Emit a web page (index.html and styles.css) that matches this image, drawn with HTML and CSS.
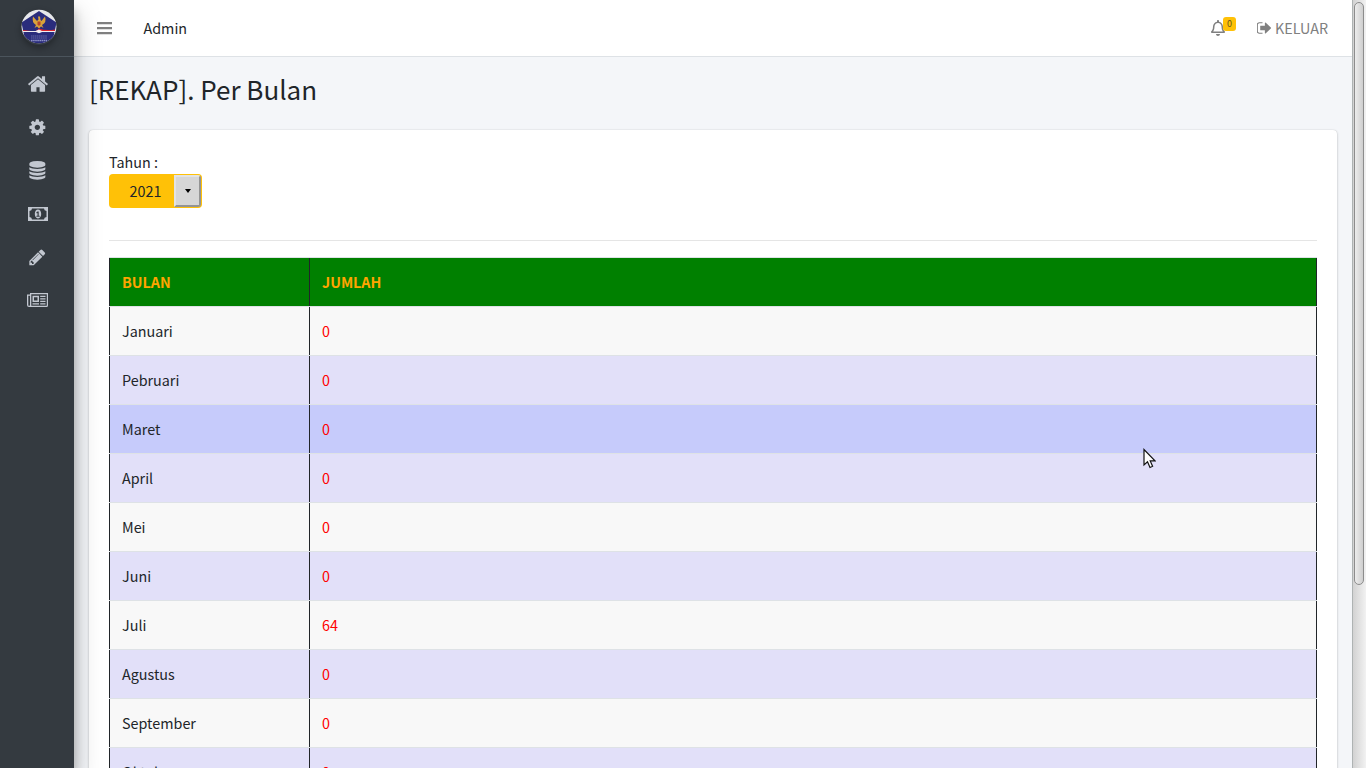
FILE: index.html
```html
<!DOCTYPE html>
<html lang="id">
<head>
<meta charset="utf-8">
<title>Rekap Per Bulan</title>
<link rel="stylesheet" href="styles.css">
</head>
<body>
<div class="app">
  <aside class="sidebar">
    <div class="brand">
      <svg class="logo" viewBox="0 0 36 36">
        <defs><clipPath id="round"><ellipse cx="18" cy="17.500" rx="17.500" ry="16.700"/></clipPath></defs>
        <g clip-path="url(#round)">
          <path fill="#e6e7ea" d="M0 0h36v36H0z"/>
          <path fill="#2a2c7c" d="M18 2 35.500 13.500 31 36H5L.5 13.500z"/>
          <path fill="#d9a23a" d="M12 7.500q-1.500 6 3 8.500l-1.500 3 2.500-1.500 2 2 2-2 2.500 1.500-1.500-3q5-2.500 3-8.500l-3.500 4.500-1-1-.5-3.500-2 0 .5 3-1.500 1.500z"/>
          <path fill="#b5452c" d="M16.500 12.500h3v3L18 17l-1.500-1.500z"/>
          <path fill="#d8262e" d="M2 21q8 1.500 13 1l3-2.500q7 2.500 16 1V22H2z"/>
          <path fill="#f1edf0" d="M2 22h12.500l3.500-1.500L21 22h13v1H21l-3 1.300L15 23H2z"/>
          <path stroke="#6d70ac" stroke-width=".9" stroke-dasharray="1.500 .4" d="M10 27h16M10 29h16"/>
          <path stroke="#8d90c4" stroke-width="1.600" stroke-dasharray="1.600 .5" d="M10 31.500h16"/>
        </g>
      </svg>
    </div>
    <nav class="menu">
      <a class="menu-item"><svg class="ico-home" viewBox="0 0 1792 1792"><path d="M1472 992v480q0 26-19 45t-45 19h-384v-384h-256v384h-384q-26 0-45-19t-19-45v-480q0-1 .5-3t.5-3l575-474 575 474q1 2 1 6zm223-69l-62 74q-8 9-21 11h-3q-13 0-21-7l-692-577-692 577q-12 8-24 7-13-2-21-11l-62-74q-8-10-7-23.500t11-21.500l719-599q32-26 76-26t76 26l244 204v-195q0-14 9-23t23-9h192q14 0 23 9t9 23v408l219 182q10 8 11 21.500t-7 23.500z"/></svg></a>
      <a class="menu-item"><svg class="ico" viewBox="0 0 1792 1792"><path d="M1152 896q0-106-75-181t-181-75-181 75-75 181 75 181 181 75 181-75 75-181zm512-109v222q0 12-8 23t-20 13l-185 28q-19 54-39 91 35 50 107 138 10 12 10 25t-9 23q-27 37-99 108t-94 71q-12 0-26-9l-138-108q-44 23-91 38-16 136-29 186-7 28-36 28h-222q-14 0-24.500-8.500t-11.500-21.500l-28-184q-49-16-90-37l-141 107q-10 9-25 9-14 0-25-11-126-114-165-168-7-10-7-23 0-12 8-23 15-21 51-66.500t54-70.500q-27-50-41-99l-183-27q-13-2-21-12.500t-8-23.500v-222q0-12 8-23t19-13l186-28q14-46 39-92-40-57-107-138-10-12-10-24 0-10 9-23 26-36 98.500-107.500t94.500-71.500q13 0 26 10l138 107q44-23 91-38 16-136 29-186 7-28 36-28h222q14 0 24.500 8.500t11.500 21.500l28 184q49 16 90 37l142-107q9-9 24-9 13 0 25 10 129 119 165 170 7 8 7 22 0 12-8 23-15 21-51 66.500t-54 70.500q26 50 41 98l183 28q13 2 21 12.500t8 23.500z"/></svg></a>
      <a class="menu-item"><svg class="ico" viewBox="0 0 1792 1792"><path d="M896 768q237 0 443-43t325-127v170q0 69-103 128t-280 93.500-385 34.500-385-34.500-280-93.500-103-128v-170q119 84 325 127t443 43zm0 768q237 0 443-43t325-127v170q0 69-103 128t-280 93.500-385 34.500-385-34.500-280-93.500-103-128v-170q119 84 325 127t443 43zm0-384q237 0 443-43t325-127v170q0 69-103 128t-280 93.500-385 34.500-385-34.500-280-93.500-103-128v-170q119 84 325 127t443 43zm0-1152q208 0 385 34.500t280 93.500 103 128v128q0 69-103 128t-280 93.500-385 34.500-385-34.500-280-93.500-103-128v-128q0-69 103-128t280-93.500 385-34.500z"/></svg></a>
      <a class="menu-item"><svg class="ico-wide" viewBox="0 0 20 14"><path fill-rule="evenodd" d="M0 0h20v14H0zM4 1.500A2.600 2.600 0 0 1 1.500 4v6A2.600 2.600 0 0 1 4 12.500h12A2.600 2.600 0 0 1 18.500 10V4A2.600 2.600 0 0 1 16 1.500z"/><path fill-rule="evenodd" d="M10 2.600c2 0 3.200 2 3.200 4.400S12 11.400 10 11.400 6.800 9.400 6.800 7 8 2.600 10 2.600zM9.500 4.500 8.200 5.600l.7.800.6-.4v2.800H8.400v1h3.300v-1h-1V4.500z"/></svg></a>
      <a class="menu-item"><svg class="ico" viewBox="0 0 1792 1792"><path d="M491 1536l91-91-235-235-91 91v107h128v128h107zm523-928q0-22-22-22-10 0-17 7l-542 542q-7 7-7 17 0 22 22 22 10 0 17-7l542-542q7-7 7-17zm-54-192l416 416-832 832h-416v-416zm683 96q0 53-37 90l-166 166-416-416 166-165q36-38 90-38 53 0 91 38l235 234q37 39 37 91z"/></svg></a>
      <a class="menu-item"><svg class="ico-news" viewBox="0 0 21 14"><path fill-rule="evenodd" d="M3 0h18v12.500a1.500 1.500 0 0 1-1.500 1.500h-17.500A2 2 0 0 1 0 12V1.500h3zM1.300 2.800V12a.8.800 0 0 0 1.700 0V2.800zM4.300 1.300V12.700h15a.5.500 0 0 0 .5-.5V1.300zM5.500 2.700H12V9H5.500zM7 4.200v3.300h3.500V4.200zM13.200 2.700h5.300V4h-5.300zM13.200 5.200h5.300v1.300h-5.300zM13.200 7.700h5.300V9h-5.300zM5.500 10.200H12v1.300H5.500zM13.200 10.200h5.300v1.300h-5.300z"/></svg></a>
    </nav>
  </aside>
  <div class="main">
    <header class="topbar">
      <svg class="bars" viewBox="0 0 15 13"><path d="M0 0h15v2.300H0zM0 5h15v2.300H0zM0 10h15v2.300H0z"/></svg>
      <span class="user">Admin</span>
      <span class="bell"><svg viewBox="0 0 448 512"><path d="M439.390 362.290c-19.320-20.760-55.470-51.990-55.470-154.290 0-77.700-54.480-139.900-127.940-155.160V32c0-17.670-14.320-32-31.980-32s-31.980 14.330-31.980 32v20.840C118.560 68.100 64.080 130.300 64.080 208c0 102.300-36.150 133.530-55.470 154.290-6 6.450-8.660 14.160-8.610 21.710.11 16.400 12.980 32 32.100 32h383.800c19.120 0 32-15.600 32.100-32 .05-7.550-2.610-15.270-8.610-21.710zM67.530 368c21.220-27.970 44.420-74.330 44.530-159.420 0-.2-.06-.38-.06-.58 0-61.860 50.140-112 112-112s112 50.140 112 112c0 .2-.06.38-.06.58.11 85.100 23.310 131.460 44.530 159.420H67.530zM224 512c35.320 0 63.970-28.650 63.970-64H160.030c0 35.350 28.650 64 63.970 64z"/></svg><span class="badge">0</span></span>
      <a class="logout"><svg viewBox="96 256 1536 1280"><path d="M704 1440q0 4 1 20t.5 26.500-3 23.500-10 19.500-20.500 6.500h-320q-119 0-203.500-84.500t-84.500-203.500v-704q0-119 84.500-203.500t203.500-84.500h320q13 0 22.500 9.500t9.500 22.500q0 4 1 20t.5 26.500-3 23.500-10 19.500-20.500 6.500h-320q-66 0-113 47t-47 113v704q0 66 47 113t113 47h312l11.500 1 11.500 3 8 5.500 7 9 2 13.500zm928-544q0 26-19 45l-544 544q-19 19-45 19t-45-19-19-45v-288h-448q-26 0-45-19t-19-45v-384q0-26 19-45t45-19h448v-288q0-26 19-45t45-19 45 19l544 544q19 19 19 45z"/></svg><span>KELUAR</span></a>
    </header>
    <h1 class="title">[REKAP]. Per Bulan</h1>
    <section class="card">
      <div class="label">Tahun :</div>
      <div class="select"><span class="year">2021</span><span class="drop"></span></div>
      <div class="rule"></div>
      <div class="table">
        <div class="row head"><div class="month">BULAN</div><div class="count">JUMLAH</div></div>
        <div class="row"><div class="month">Januari</div><div class="count">0</div></div>
        <div class="row alt"><div class="month">Pebruari</div><div class="count">0</div></div>
        <div class="row hover"><div class="month">Maret</div><div class="count">0</div></div>
        <div class="row alt"><div class="month">April</div><div class="count">0</div></div>
        <div class="row"><div class="month">Mei</div><div class="count">0</div></div>
        <div class="row alt"><div class="month">Juni</div><div class="count">0</div></div>
        <div class="row"><div class="month">Juli</div><div class="count">64</div></div>
        <div class="row alt"><div class="month">Agustus</div><div class="count">0</div></div>
        <div class="row"><div class="month">September</div><div class="count">0</div></div>
        <div class="row alt"><div class="month">Oktober</div><div class="count">0</div></div>
      </div>
    </section>
  </div>
  <div class="scrollbar"><div class="thumb"></div></div>
</div>
<svg class="cursor" viewBox="0 0 13 21"><path fill="#fff" stroke="#111" stroke-width="1.200" d="M1 1.500V17l3.500-3.200L7 19.500l2.600-1.200-2.400-5.400H12z"/></svg>
</body>
</html>
```
FILE: styles.css
```css
* { box-sizing: border-box; }
body {
  margin: 0;
  height: 768px;
  overflow: hidden;
  font-family: "Noto Sans CJK SC", sans-serif;
  font-size: 14.35px;
  line-height: 24px;
  color: #212529;
}
svg { display: block; fill: currentColor; }
.app { display: flex; height: 768px; overflow: hidden; }
.sidebar {
  position: relative;
  z-index: 2;
  flex: none;
  width: 74px;
  background: #343a40;
  color: #c2c7d0;
  box-shadow: 0 14px 28px rgba(0,0,0,.25), 0 10px 10px rgba(0,0,0,.22);
}
.brand {
  height: 57px;
  padding: 9px 0 0 20.5px;
  border-bottom: 1px solid #4b545c;
}
.logo { width: 36px; height: 36px; border-radius: 50%; box-shadow: 0 3px 6px rgba(0,0,0,.3); }
.menu { display: flex; flex-direction: column; padding-top: 5.5px; }
.menu-item { display: flex; align-items: center; justify-content: center; height: 43.2px; padding-left: 1px; }
.ico { width: 18.7px; height: 18.7px; }
.ico-home { width: 22px; height: 22px; }
.ico-wide { width: 20px; height: 14px; }
.ico-news { width: 21px; height: 14px; }
.main {
  flex: 1;
  min-width: 0;
  background: #f4f6f9;
}
.topbar {
  display: flex;
  align-items: center;
  height: 57px;
  padding: 0 24px 0 23px;
  background: #fff;
  border-bottom: 1px solid #dee2e6;
  color: #808080;
}
.bars { width: 15px; height: 13px; margin-top: 1px; }
.user { margin-left: 31.5px; color: #212529; }
.bell { position: relative; margin-left: auto; width: 14px; }
.bell svg { width: 14px; height: 16px; }
.badge {
  position: absolute;
  left: 12px;
  top: -3px;
  width: 13px;
  height: 14px;
  border-radius: 3px;
  background: #ffc107;
  color: #66581f;
  font-size: 9px;
  line-height: 13px;
  text-align: center;
}
.logout { display: flex; align-items: center; gap: 4px; margin-left: 32px; }
.logout svg { width: 14px; height: 12px; }
.title { margin: 14px 0 0 15px; font-size: 26px; font-weight: 400; line-height: 36px; }
.card {
  height: 700px;
  margin: 23px 15px 0;
  padding: 20px 20px 0;
  background: #fff;
  border-radius: 4px;
  box-shadow: 0 0 1px rgba(0,0,0,.2), 0 1px 3px rgba(0,0,0,.2);
}
.label { height: 24px; }
.select {
  display: flex;
  width: 93px;
  height: 34px;
  padding: 1px;
  border-radius: 4px;
  background: #ffc107;
}
.year { flex: 1; padding-left: 19.5px; line-height: 32px; }
.drop {
  display: flex;
  align-items: center;
  justify-content: center;
  width: 27px;
  border: 2px solid;
  border-color: #e3e3e3 #949494 #949494 #e3e3e3;
  border-radius: 0 3px 3px 0;
  background: #d6d6d6;
}
.drop::after { content: ""; border: 3.5px solid transparent; border-top: 4px solid #000; border-bottom: 0; }
.rule { margin: 32px 0 16px; height: 1px; background: #e5e5e5; }
.row { display: flex; height: 49px; border-top: 1px solid #dee2e6; background: #f8f8f8; }
.row > div { padding: 12px 12px 0; border-left: 1px solid #212529; }
.row .month { width: 200px; }
.row .count { flex: 1; border-right: 1px solid #212529; color: #f00; }
.row.alt { background: #e2e0f9; }
.row.hover { background: #c6cbfb; }
.row.head { background: #008000; font-weight: 700; color: #ffa500; }
.row.head .count { color: #ffa500; }
.scrollbar {
  flex: none;
  width: 14px;
  padding-top: 2px;
  border-left: 1px solid #aeb3b3;
  background: linear-gradient(90deg, #d2d2d2, #f2f2f2);
}
.thumb {
  height: 583px;
  width: 10px;
  margin-left: 1px;
  border: 1px solid #8d8d8d;
  border-radius: 5px;
  background: linear-gradient(90deg, #ececec, #cfcfcf);
}
.cursor { position: absolute; left: 1143px; top: 448px; width: 13px; height: 21px; z-index: 5; }
```
